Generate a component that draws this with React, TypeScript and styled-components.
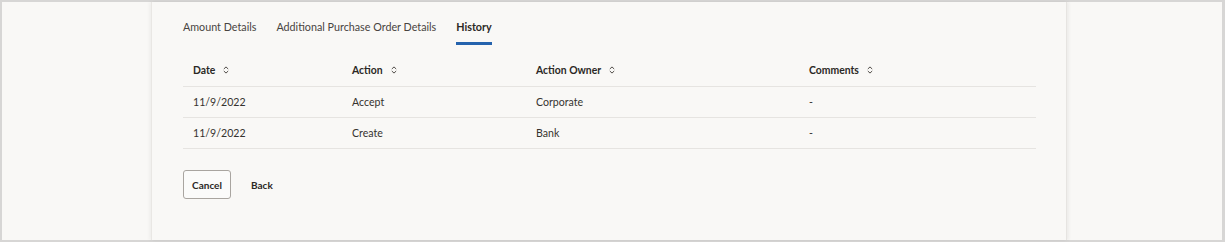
import * as React from "react";
import styled, { createGlobalStyle } from "styled-components";

const GlobalStyle = createGlobalStyle`
  html, body {
    margin: 0;
    padding: 0;
    background: #ffffff;
  }
  body {
    font-family: Lato, "Noto Sans", "Liberation Sans", sans-serif;
    color: #3b3834;
  }
`;

type Row = { date: string; action: string; owner: string; comments: string };

const rows: Row[] = [
  { date: "11/9/2022", action: "Accept", owner: "Corporate", comments: "-" },
  { date: "11/9/2022", action: "Create", owner: "Bank", comments: "-" },
];

const columns = ["Date", "Action", "Action Owner", "Comments"];

const SortIcon: React.FC = () => (
  <svg width="6" height="8" viewBox="0 0 6 8" fill="none">
    <path d="M0.8 3 L3 0.9 L5.2 3" stroke="#4f4b47" strokeWidth="1" />
    <path d="M0.8 5 L3 7.1 L5.2 5" stroke="#4f4b47" strokeWidth="1" />
  </svg>
);

const App: React.FunctionComponent = () => {
  return (
    <>
      <GlobalStyle />
      <Frame>
        <Side />
        <Panel>
          <Tabs>
            <Tab>Amount Details</Tab>
            <Tab>Additional Purchase Order Details</Tab>
            <Tab $active>History</Tab>
          </Tabs>
          <Table>
            <HeaderRow>
              {columns.map((c) => (
                <HeaderCell key={c}>
                  {c}
                  <SortIcon />
                </HeaderCell>
              ))}
            </HeaderRow>
            {rows.map((r, i) => (
              <BodyRow key={i}>
                <Cell>{r.date}</Cell>
                <Cell>{r.action}</Cell>
                <Cell>{r.owner}</Cell>
                <Cell>{r.comments}</Cell>
              </BodyRow>
            ))}
          </Table>
          <Actions>
            <OutlineButton>Cancel</OutlineButton>
            <TextButton>Back</TextButton>
          </Actions>
        </Panel>
        <Side $grow />
      </Frame>
    </>
  );
};

export default App;

const Frame = styled.div`
  box-sizing: border-box;
  width: 1225px;
  height: 242px;
  display: flex;
  background: #f9f8f6;
  border-style: solid;
  border-color: #d7d6d5;
  border-width: 2px 3px 2px 2px;
`;

const Side = styled.div<{ $grow?: boolean }>`
  width: 149px;
  flex: ${({ $grow }) => ($grow ? "1" : "none")};
  background: #f9f8f6;
`;

const Panel = styled.section`
  position: relative;
  z-index: 1;
  box-sizing: border-box;
  width: 916px;
  padding: 17px 31px 0 31px;
  background: #f9f8f6;
  border-left: 1px solid #e9e7e4;
  border-right: 1px solid #e6e4e1;
  box-shadow: -2px 0 3px rgba(0, 0, 0, 0.04), 2px 0 3px rgba(0, 0, 0, 0.05);
`;

const Tabs = styled.div`
  display: flex;
  gap: 20px;
`;

const Tab = styled.div<{ $active?: boolean }>`
  font-size: 10.75px;
  line-height: 16px;
  padding-bottom: 7px;
  color: ${({ $active }) => ($active ? "#2b2825" : "#48443f")};
  font-weight: ${({ $active }) => ($active ? 700 : 400)};
  border-bottom: 3px solid ${({ $active }) => ($active ? "#2563ad" : "transparent")};
`;

const Table = styled.div`
  width: 853px;
  margin-top: 9px;
`;

const grid = `
  display: grid;
  grid-template-columns: 159px 184px 273px 237px;
  align-items: center;
  border-bottom: 1px solid #e6e4e1;
`;

const HeaderRow = styled.div`
  ${grid}
  height: 32px;
`;

const BodyRow = styled.div`
  ${grid}
  height: 30px;
`;

const HeaderCell = styled.div`
  display: flex;
  align-items: center;
  gap: 8px;
  padding-left: 10px;
  font-size: 10.4px;
  font-weight: 700;
  color: #2b2825;
`;

const Cell = styled.div`
  padding-left: 10px;
  font-size: 10.6px;
  color: #36332f;
`;

const Actions = styled.div`
  display: flex;
  align-items: center;
  gap: 20px;
  margin-top: 21px;
`;

const OutlineButton = styled.button`
  box-sizing: border-box;
  width: 48px;
  height: 29px;
  padding: 0;
  font-family: inherit;
  font-size: 10px;
  font-weight: 700;
  color: #2b2825;
  background: #fbfbfa;
  border: 1px solid #a9a5a0;
  border-radius: 3px;
`;

const TextButton = styled.button`
  padding: 0;
  font-family: inherit;
  font-size: 10px;
  font-weight: 700;
  color: #2b2825;
  background: none;
  border: none;
`;
